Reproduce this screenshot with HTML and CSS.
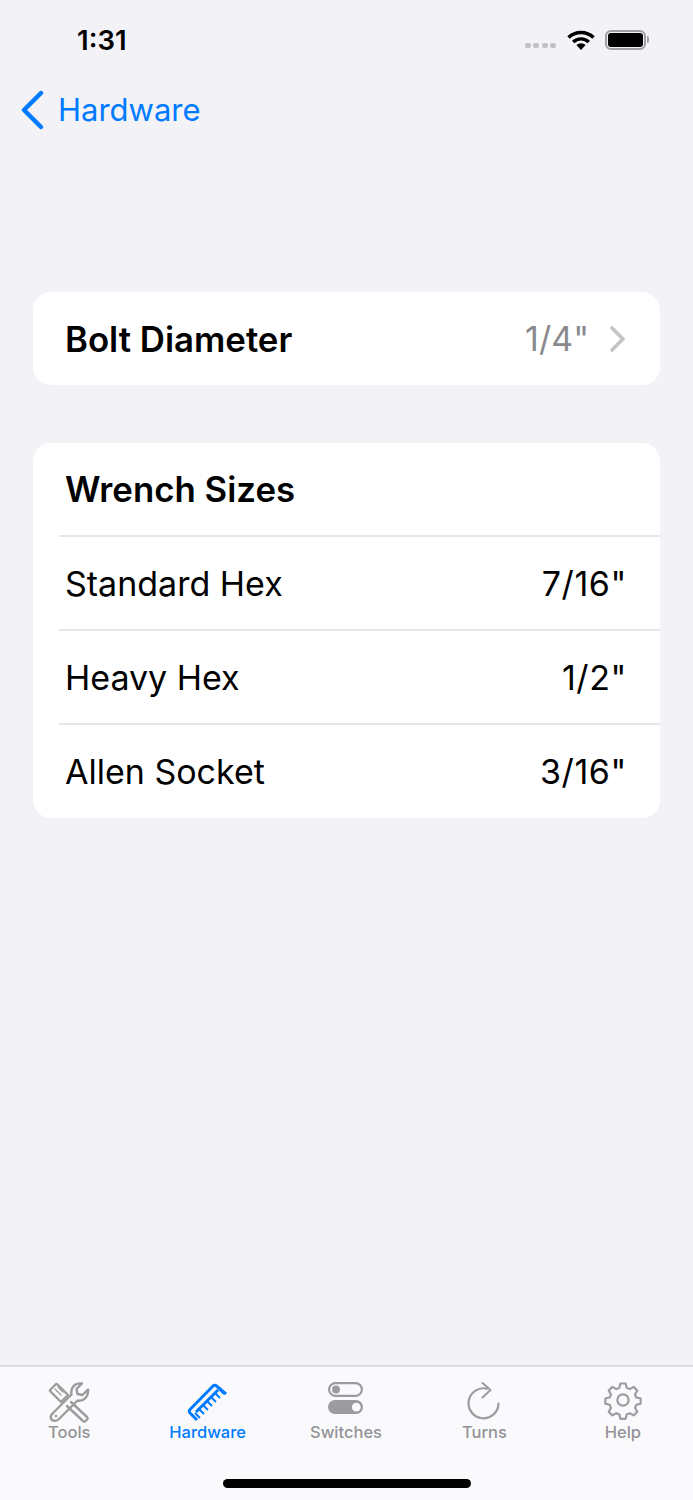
FILE: index.html
```html
<!DOCTYPE html>
<html lang="en">
<head>
  <meta charset="UTF-8">
  <meta name="viewport" content="width=device-width, initial-scale=1.0">
  <title>Hardware</title>
  <link rel="stylesheet" href="styles.css">
</head>
<body>
  <div class="screen">
    <div class="status-bar">
      <span class="clock">1:31</span>
      <div class="status-icons">
        <div class="signal"><i></i><i></i><i></i><i></i></div>
        <svg class="wifi" width="28" height="20" viewBox="0 0 28 20">
          <path d="M1.5 7.5a18 18 0 0 1 25 0" fill="none" stroke="#000" stroke-width="3.4"/>
          <path d="M6.2 12a11.2 11.2 0 0 1 15.6 0" fill="none" stroke="#000" stroke-width="3.4"/>
          <path d="M14 20l-4.6-5a6.6 6.6 0 0 1 9.2 0z"/>
        </svg>
        <div class="battery"><div class="battery-fill"></div></div>
        <div class="battery-cap"></div>
      </div>
    </div>

    <div class="nav-bar">
      <svg class="back-chevron" width="26" height="40" viewBox="0 0 26 40">
        <path d="M21 3L4 20l17 17" fill="none" stroke="#007aff" stroke-width="4.4" stroke-linecap="round" stroke-linejoin="round"/>
      </svg>
      <span class="back-label">Hardware</span>
    </div>

    <main class="content">
      <section class="card">
        <div class="row">
          <span class="row-title">Bolt Diameter</span>
          <span class="muted">1/4"</span>
          <svg class="disclosure" width="18" height="28" viewBox="0 0 18 28">
            <path d="M3 3l11 11L3 25" fill="none" stroke="#c4c4c7" stroke-width="3.6" stroke-linecap="round" stroke-linejoin="round"/>
          </svg>
        </div>
      </section>

      <section class="card">
        <div class="row row-head"><span class="row-title">Wrench Sizes</span></div>
        <div class="row"><span class="row-label">Standard Hex</span><span class="row-value">7/16"</span></div>
        <div class="row"><span class="row-label">Heavy Hex</span><span class="row-value">1/2"</span></div>
        <div class="row row-last"><span class="row-label">Allen Socket</span><span class="row-value">3/16"</span></div>
      </section>
    </main>

    <nav class="tab-bar">
      <div class="tabs">
        <div class="tab">
          <svg width="42" height="42" viewBox="0 0 42 42" fill="none" stroke="#9c9c9f" stroke-width="2.4" stroke-linejoin="round" stroke-linecap="round">
            <path d="M2.5 7.5l5-5q1-1 2 0L20 13l-7 7L2.5 9.5q-1-1 0-2z"/>
            <path d="M7 7l6 6M10 5l5 5" stroke-width="1.4"/>
            <path d="M23 20l16 15q1 1 .5 2l-2.5 2.5q-1 .5-2-.5L19 24"/>
            <path d="M5 31L23.5 12.5C22 6 27 .5 34 1.5L28.5 7l1 5 5 1L40 7.5C41 14.5 35.5 20 29.5 18.5L11 37C6 42-1 36 5 31z"/>
            <circle cx="8" cy="34" r="1.3" fill="#9c9c9f" stroke="none"/>
          </svg>
          <span class="tab-label">Tools</span>
        </div>
        <div class="tab active">
          <svg width="42" height="42" viewBox="0 0 42 42" fill="none" stroke="#007aff" stroke-width="3" stroke-linejoin="round">
            <path d="M10 38L3 31q-1.5-2 0-3.5L26 4q2-1.5 3.5 0L39 12"/>
            <path d="M9 30l22-22"/>
            <path d="M13 36l-5-5M17 32l-5-5M21 28l-5-5M25 24l-5-5M29 20l-5-5M33 16l-5-5M37 12l-5-5" stroke-width="2"/>
          </svg>
          <span class="tab-label">Hardware</span>
        </div>
        <div class="tab">
          <svg width="42" height="42" viewBox="0 0 42 42">
            <rect x="4.1" y="1.1" width="32.8" height="12.8" rx="6.4" fill="none" stroke="#9c9c9f" stroke-width="2.2"/>
            <circle cx="11" cy="7.5" r="4" fill="#9c9c9f"/>
            <rect x="3" y="18" width="35" height="14" rx="7" fill="#9c9c9f"/>
            <circle cx="31.3" cy="25.2" r="4.4" fill="#fafafc"/>
          </svg>
          <span class="tab-label">Switches</span>
        </div>
        <div class="tab">
          <svg width="42" height="42" viewBox="0 0 42 42" fill="none" stroke="#9c9c9f" stroke-width="2.2" stroke-linecap="round" stroke-linejoin="round">
            <path d="M24 6.7A15 15 0 1 0 35.5 21.5"/>
            <path d="M19.5 1l8 7-8 7.5" stroke-width="2"/>
          </svg>
          <span class="tab-label">Turns</span>
        </div>
        <div class="tab">
          <svg width="42" height="42" viewBox="0 0 42 42" fill="none" stroke="#9c9c9f" stroke-width="2.5" stroke-linejoin="round">
            <g transform="translate(21 18) scale(.87) translate(-20.5 -20.5)">
              <path d="M17.5 1.5h6l1.2 5 3.5 1.5 4.5-2.6 4.2 4.2-2.6 4.5 1.5 3.5 5 1.2v6l-5 1.2-1.5 3.5 2.6 4.5-4.2 4.2-4.500-2.600-3.500 1.500-1.200 5h-6l-1.200-5-3.500-1.500-4.500 2.600-4.200-4.200 2.600-4.500-1.500-3.500-5-1.200v-6l5-1.200 1.500-3.500-2.600-4.500 4.200-4.200 4.500 2.600 3.500-1.500z"/>
              <circle cx="20.5" cy="20.5" r="6.5"/>
            </g>
          </svg>
          <span class="tab-label">Help</span>
        </div>
      </div>
      <div class="home-indicator"></div>
    </nav>
  </div>
</body>
</html>
```

FILE: styles.css
```css
* {
  box-sizing: border-box;
}

body {
  margin: 0;
  font-family: Inter, "Liberation Sans", sans-serif;
  color: #000;
  background: #f2f2f7;
}

.screen {
  display: flex;
  flex-direction: column;
  height: 1500px;
  overflow: hidden;
}

/* status bar */
.status-bar {
  display: flex;
  align-items: center;
  justify-content: space-between;
  height: 78px;
  padding: 1px 44px 0 77px;
}

.clock {
  font-size: 27.5px;
  font-weight: 600;
}

.status-icons {
  display: flex;
  align-items: center;
}

.signal {
  display: flex;
  gap: 2.5px;
  margin-top: 11px;
  margin-right: 11px;
}

.signal i {
  width: 6px;
  height: 5px;
  border-radius: 2px;
  background: #c2c2c6;
}

.wifi {
  margin-right: 10px;
}

.battery {
  width: 41px;
  height: 20px;
  padding: 1px;
  border: 2px solid #a0a0a3;
  border-radius: 6px;
}

.battery-fill {
  height: 100%;
  border-radius: 3px;
  background: #000;
}

.battery-cap {
  width: 2px;
  height: 7px;
  margin-left: 1px;
  border-radius: 0 2px 2px 0;
  background: #a0a0a3;
}

/* navigation bar */
.nav-bar {
  display: flex;
  align-items: center;
  height: 64px;
  padding-left: 20px;
}

.back-label {
  margin-left: 12px;
  margin-bottom: 2px;
  font-size: 31px;
  color: #007aff;
}

/* grouped list */
.content {
  flex: 1;
  padding: 150px 33px 0;
}

.card {
  margin-bottom: 58px;
  border-radius: 18px;
  background: #fff;
  overflow: hidden;
}

.row {
  display: flex;
  align-items: center;
  height: 94px;
  margin-left: 26px;
  padding-left: 6px;
  padding-right: 33px;
  border-top: 2px solid #e6e6e8;
}

.row:first-child {
  height: 93px;
  border-top: none;
}

.row.row-head {
  height: 92px;
}

.row-last {
  height: 95px;
}

.row-title {
  flex: 1;
  font-size: 34.8px;
  font-weight: 600;
}

.row-label {
  flex: 1;
  font-size: 34px;
}

.row-value {
  font-size: 34px;
  letter-spacing: 0.6px;
}

.muted {
  font-size: 34px;
  color: #8a8a8e;
}

.disclosure {
  margin-left: 20px;
}

/* tab bar */
.tab-bar {
  height: 135px;
  border-top: 2px solid #dcdcde;
  background: #fafafc;
}

.tabs {
  display: flex;
  padding-top: 15px;
  padding-right: 1px;
}

.tab {
  flex: 1;
  display: flex;
  flex-direction: column;
  align-items: center;
  color: #939397;
}

.tab.active {
  color: #007aff;
}

.tab svg {
  display: block;
}

.tab-label {
  margin-top: -2px;
  font-size: 16.5px;
  font-weight: 500;
}

.home-indicator {
  width: 248px;
  height: 9px;
  margin: 37px auto 0;
  border-radius: 5px;
  background: #000;
}
```
